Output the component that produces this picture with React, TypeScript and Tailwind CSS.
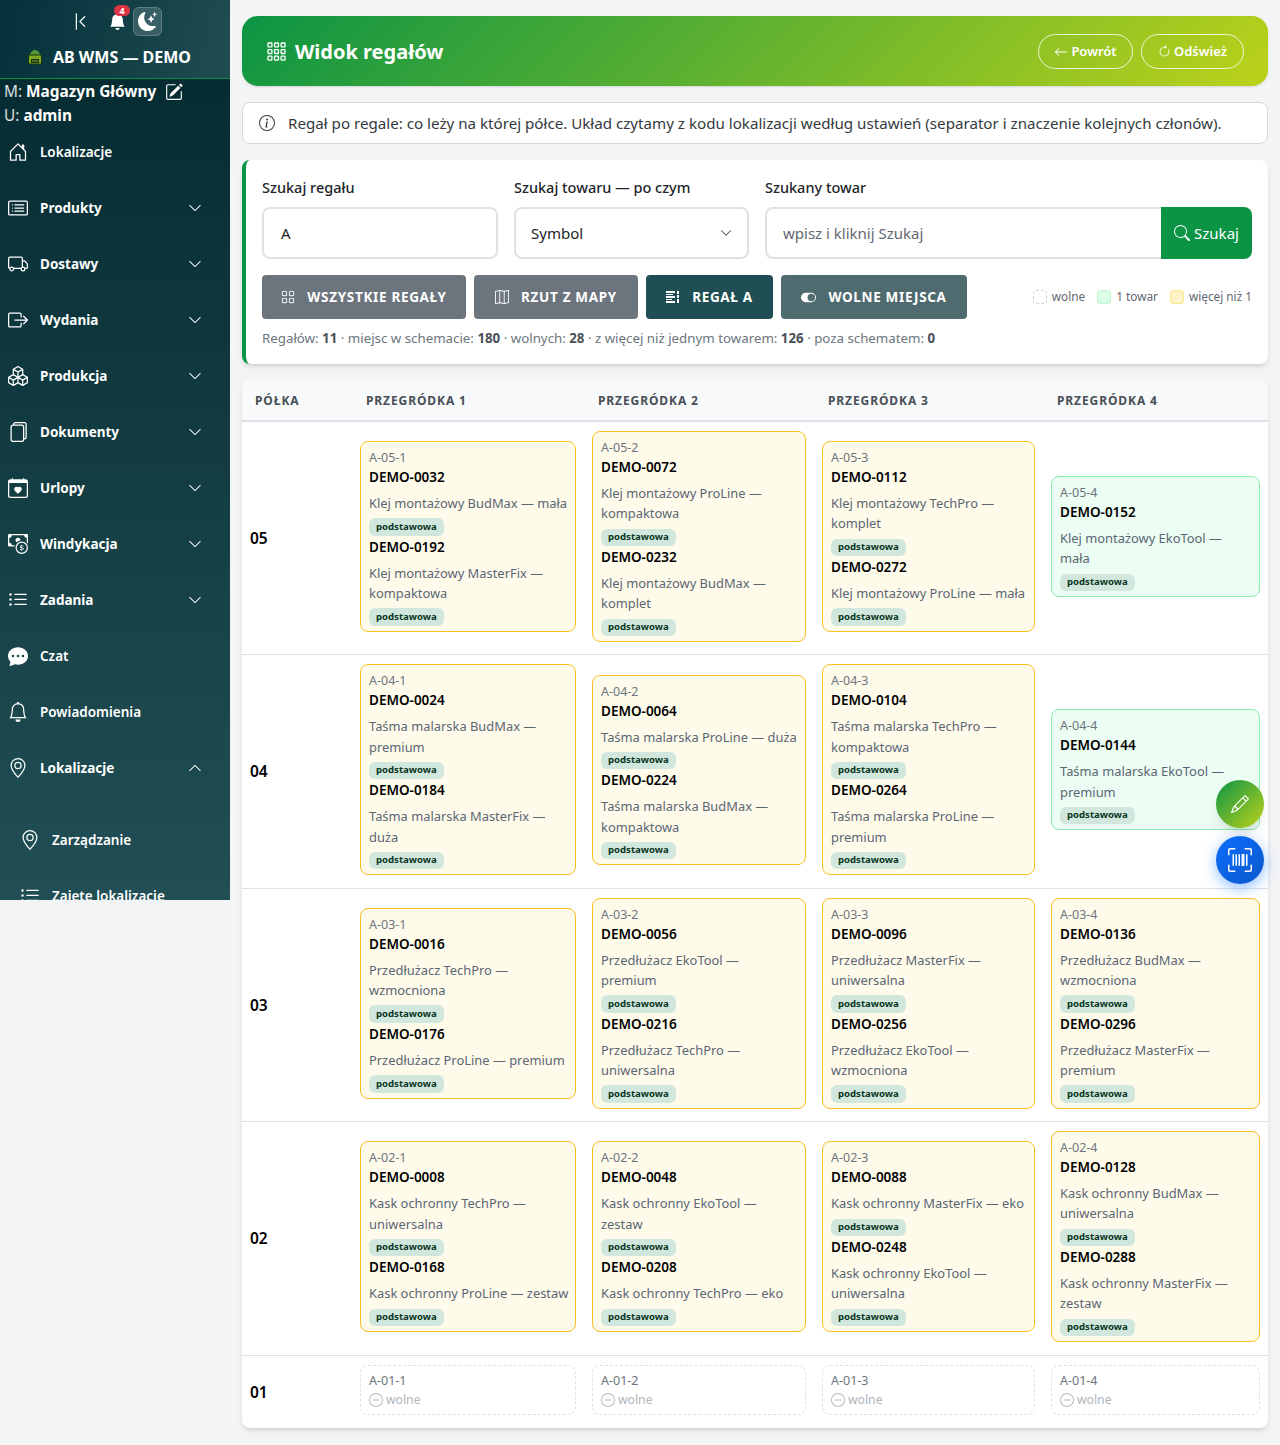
import type { ReactNode } from 'react';
import {
  BsArrowClockwise,
  BsArrowLeft,
  BsBell,
  BsBellFill,
  BsBoxArrowRight,
  BsBoxes,
  BsCalendarHeart,
  BsCardList,
  BsCashCoin,
  BsChatDotsFill,
  BsChevronBarLeft,
  BsChevronDown,
  BsChevronUp,
  BsDashCircle,
  BsFiles,
  BsGeoAlt,
  BsGrid,
  BsGrid3X3Gap,
  BsHouseDoor,
  BsInfoCircle,
  BsListUl,
  BsMap,
  BsMoonStarsFill,
  BsPencil,
  BsPencilSquare,
  BsSearch,
  BsToggleOn,
  BsTruck,
  BsUpcScan,
} from 'react-icons/bs';

const menu = [
  { label: 'Lokalizacje', icon: BsHouseDoor, weight: 'font-semibold' },
  { label: 'Produkty', icon: BsCardList, arrow: 'down' },
  { label: 'Dostawy', icon: BsTruck, arrow: 'down' },
  { label: 'Wydania', icon: BsBoxArrowRight, arrow: 'down' },
  { label: 'Produkcja', icon: BsBoxes, arrow: 'down' },
  { label: 'Dokumenty', icon: BsFiles, arrow: 'down' },
  { label: 'Urlopy', icon: BsCalendarHeart, arrow: 'down' },
  { label: 'Windykacja', icon: BsCashCoin, arrow: 'down' },
  { label: 'Zadania', icon: BsListUl, arrow: 'down' },
  { label: 'Czat', icon: BsChatDotsFill, weight: 'font-semibold' },
  { label: 'Powiadomienia', icon: BsBell, weight: 'font-semibold' },
  { label: 'Lokalizacje', icon: BsGeoAlt, arrow: 'up' },
];

type Item = { sku: string; name: string };
type Cell = { code: string; items: Item[] };

const rows: { shelf: string; cells: Cell[] }[] = [
  {
    shelf: '05',
    cells: [
      { code: 'A-05-1', items: [{ sku: 'DEMO-0032', name: 'Klej montażowy BudMax — mała' }, { sku: 'DEMO-0192', name: 'Klej montażowy MasterFix — kompaktowa' }] },
      { code: 'A-05-2', items: [{ sku: 'DEMO-0072', name: 'Klej montażowy ProLine — kompaktowa' }, { sku: 'DEMO-0232', name: 'Klej montażowy BudMax — komplet' }] },
      { code: 'A-05-3', items: [{ sku: 'DEMO-0112', name: 'Klej montażowy TechPro — komplet' }, { sku: 'DEMO-0272', name: 'Klej montażowy ProLine — mała' }] },
      { code: 'A-05-4', items: [{ sku: 'DEMO-0152', name: 'Klej montażowy EkoTool — mała' }] },
    ],
  },
  {
    shelf: '04',
    cells: [
      { code: 'A-04-1', items: [{ sku: 'DEMO-0024', name: 'Taśma malarska BudMax — premium' }, { sku: 'DEMO-0184', name: 'Taśma malarska MasterFix — duża' }] },
      { code: 'A-04-2', items: [{ sku: 'DEMO-0064', name: 'Taśma malarska ProLine — duża' }, { sku: 'DEMO-0224', name: 'Taśma malarska BudMax — kompaktowa' }] },
      { code: 'A-04-3', items: [{ sku: 'DEMO-0104', name: 'Taśma malarska TechPro — kompaktowa' }, { sku: 'DEMO-0264', name: 'Taśma malarska ProLine — premium' }] },
      { code: 'A-04-4', items: [{ sku: 'DEMO-0144', name: 'Taśma malarska EkoTool — premium' }] },
    ],
  },
  {
    shelf: '03',
    cells: [
      { code: 'A-03-1', items: [{ sku: 'DEMO-0016', name: 'Przedłużacz TechPro — wzmocniona' }, { sku: 'DEMO-0176', name: 'Przedłużacz ProLine — premium' }] },
      { code: 'A-03-2', items: [{ sku: 'DEMO-0056', name: 'Przedłużacz EkoTool —\npremium' }, { sku: 'DEMO-0216', name: 'Przedłużacz TechPro — uniwersalna' }] },
      { code: 'A-03-3', items: [{ sku: 'DEMO-0096', name: 'Przedłużacz MasterFix — uniwersalna' }, { sku: 'DEMO-0256', name: 'Przedłużacz EkoTool — wzmocniona' }] },
      { code: 'A-03-4', items: [{ sku: 'DEMO-0136', name: 'Przedłużacz BudMax — wzmocniona' }, { sku: 'DEMO-0296', name: 'Przedłużacz MasterFix — premium' }] },
    ],
  },
  {
    shelf: '02',
    cells: [
      { code: 'A-02-1', items: [{ sku: 'DEMO-0008', name: 'Kask ochronny TechPro — uniwersalna' }, { sku: 'DEMO-0168', name: 'Kask ochronny ProLine — zestaw' }] },
      { code: 'A-02-2', items: [{ sku: 'DEMO-0048', name: 'Kask ochronny EkoTool — zestaw' }, { sku: 'DEMO-0208', name: 'Kask ochronny TechPro — eko' }] },
      { code: 'A-02-3', items: [{ sku: 'DEMO-0088', name: 'Kask ochronny MasterFix — eko' }, { sku: 'DEMO-0248', name: 'Kask ochronny EkoTool — uniwersalna' }] },
      { code: 'A-02-4', items: [{ sku: 'DEMO-0128', name: 'Kask ochronny BudMax — uniwersalna' }, { sku: 'DEMO-0288', name: 'Kask ochronny MasterFix — zestaw' }] },
    ],
  },
  {
    shelf: '01',
    cells: [
      { code: 'A-01-1', items: [] },
      { code: 'A-01-2', items: [] },
      { code: 'A-01-3', items: [] },
      { code: 'A-01-4', items: [] },
    ],
  },
];

const gridCols = 'grid grid-cols-[110px_232px_230px_229px_225px]';

// logo magazynu
const LogoIcon = () => (
  <svg width="16" height="16" viewBox="0 0 16 16">
    <path d="M3 6c0-2.5 2.5-5 5-5s5 2.500 5 5z" fill="#4f9a35" />
    <rect x="1.500" y="6" width="13" height="9" fill="#7fa821" stroke="#1b3212" />
    <rect x="4" y="10" width="8" height="4" fill="#1d3312" />
    <rect x="5" y="11.500" width="1.500" height="1" fill="#a8c84a" />
    <rect x="7.300" y="11.500" width="1.500" height="1" fill="#a8c84a" />
    <rect x="9.500" y="11.500" width="1.500" height="1" fill="#a8c84a" />
  </svg>
);

// ikona regalu: linie z kolumna po prawej
const ShelfIcon = () => (
  <svg width="14" height="14" viewBox="0 0 14 14" fill="currentColor">
    <rect x="0" y="1" width="9" height="2" />
    <rect x="0" y="4" width="7" height="1" />
    <rect x="0" y="6" width="9" height="2" />
    <rect x="0" y="9" width="6" height="1" />
    <rect x="0" y="11" width="9" height="2" />
    <rect x="11" y="1" width="2" height="3" />
    <rect x="11" y="5" width="2" height="3" />
    <rect x="11" y="9" width="2" height="4" />
  </svg>
);

const Sidebar = () => (
  <aside className="h-[900px] w-[230px] shrink-0 overflow-hidden bg-[linear-gradient(180deg,#03292f,#214f55)] text-white">
    <div className="h-[79px] border-b border-[#0b8a45] bg-[linear-gradient(100deg,#04313a,#1f4d52)]">
      <div className="flex h-[43px] items-center pl-[71px]">
        <BsChevronBarLeft size={19} />
        <div className="relative ml-[19px]">
          <BsBellFill size={17} />
          <span className="absolute -top-[8px] left-[5px] flex h-[11px] w-[16px] items-center justify-center rounded-full bg-[#dc3545] text-[9px] font-bold">4</span>
        </div>
        <div className="ml-[7px] flex h-[29px] w-[29px] items-center justify-center rounded-md border border-white/20 bg-white/15">
          <BsMoonStarsFill size={19} />
        </div>
      </div>
      <div className="flex items-center pl-[27px] pt-[2px]">
        <LogoIcon />
        <span className="ml-[10px] text-[16px] font-bold">AB WMS — DEMO</span>
      </div>
    </div>
    <div className="px-[4px] pt-[1px] text-[15.4px] leading-[24px]">
      <div className="flex items-center">
        <span className="text-white/85">M:</span>
        <b className="ml-[4px]">Magazyn Główny</b>
        <BsPencilSquare size={18} className="ml-[9px]" />
      </div>
      <div>
        <span className="text-white/85">U:</span> <b>admin</b>
      </div>
    </div>
    <nav className="-mt-[4px]">
      {menu.map((m, i) => {
        const Icon = m.icon;
        return (
          <div key={i} className="flex h-[56px] items-center pl-[8px] pr-[28px]">
            <Icon size={20} />
            <span className={`ml-[12px] flex-1 text-[13.5px] ${m.weight || 'font-bold'}`}>{m.label}</span>
            {m.arrow === 'down' && <BsChevronDown size={14} />}
            {m.arrow === 'up' && <BsChevronUp size={14} />}
          </div>
        );
      })}
      <div className="mt-[16px] flex h-[56px] items-center pl-[20px]">
        <BsGeoAlt size={20} />
        <span className="ml-[12px] text-[13.5px] font-semibold">Zarządzanie</span>
      </div>
      <div className="flex h-[56px] items-center pl-[20px]">
        <BsListUl size={20} />
        <span className="ml-[12px] text-[13.5px] font-semibold">Zajęte lokalizacje</span>
      </div>
    </nav>
  </aside>
);

const ActionButton = ({ icon, label, className }: { icon: ReactNode; label: string; className: string }) => (
  <button className={`flex h-[44px] items-center justify-center gap-[12px] rounded text-[13.5px] font-bold uppercase tracking-[0.05em] text-white ${className}`}>
    {icon}
    {label}
  </button>
);

const Legend = ({ swatch, label }: { swatch: string; label: string }) => (
  <span className="flex items-center gap-[5px]">
    <span className={`h-[14px] w-[14px] rounded-[3px] border ${swatch}`}></span>
    {label}
  </span>
);

const SlotCard = ({ cell }: { cell: Cell }) => {
  if (cell.items.length === 0) {
    return (
      <div className="mb-[6px] h-[50px] rounded-lg border border-dashed border-[#dee2e6] px-[8px] pt-[7px]">
        <div className="text-[12.500px] leading-[15px] text-[#6c757d]">{cell.code}</div>
        <div className="mt-[3px] flex items-center gap-[3px] text-[12.200px] leading-[18px] text-[#adb5bd]">
          <BsDashCircle size={14} />
          wolne
        </div>
      </div>
    );
  }
  const multi = cell.items.length > 1;
  return (
    <div className={`mb-[5px] rounded-lg border pb-[4px] pl-[8px] pr-[6px] pt-[8px] ${multi ? 'border-[#fbbf24] bg-[#fffbeb]' : 'border-[#86efac] bg-[#ecfdf3]'}`}>
      <div className="text-[12.500px] leading-[15px] text-[#6c757d]">{cell.code}</div>
      <div className="pt-[2px]">
        {cell.items.map(item => (
          <div key={item.sku}>
            <div className="text-[13.500px] font-semibold leading-[21px] text-black">{item.sku}</div>
            <div className="mt-[5px] whitespace-pre-line text-[12.900px] leading-[20.25px] text-[#5b6673]">{item.name}</div>
            <div className="mb-[1px] mt-[5px] flex h-[17.500px]">
              <span className="flex items-center rounded-md bg-[#d1e7dd] px-[7px] text-[9.600px] font-bold text-[#0a3622]">podstawowa</span>
            </div>
          </div>
        ))}
      </div>
    </div>
  );
};

const App = () => {
  return (
    <div className="flex min-h-[1445px] items-start bg-[#f3f4f6] font-['Noto_Sans',sans-serif] text-[#212529]">
      <Sidebar />

      <main className="relative w-[1050px] pb-[17px] pl-[12px] pr-[12px] pt-[16px]">
        <div className="flex h-[70px] items-center justify-between rounded-2xl bg-[linear-gradient(135deg,#0b9444,#bcd21a)] pl-[24px] pr-[24px] pt-[1px] text-white shadow-sm">
          <h1 className="flex items-center gap-[8px] text-[20px] font-bold">
            <BsGrid3X3Gap size={21} />
            Widok regałów
          </h1>
          <div className="flex gap-[8px]">
            <button className="flex h-[35px] w-[95px] items-center justify-center gap-[3px] rounded-full border border-white/80 text-[13px] font-semibold">
              <BsArrowLeft size={14} />
              Powrót
            </button>
            <button className="flex h-[35px] w-[103px] items-center justify-center gap-[3px] rounded-full border border-white/80 text-[13px] font-semibold">
              <BsArrowClockwise size={13} />
              Odśwież
            </button>
          </div>
        </div>

        <div className="mt-[16px] flex h-[42px] items-center gap-[13px] rounded-lg border border-[#d5d7da] bg-white pl-[16px] text-[15.150px] text-[#343a40]">
          <BsInfoCircle size={16} />
          Regał po regale: co leży na której półce. Układ czytamy z kodu lokalizacji według ustawień (separator i znaczenie kolejnych członów).
        </div>

        <section className="mt-[16px] h-[204px] rounded-lg border-l-4 border-[#0b9444] bg-white pl-[16px] pr-[16px] pt-[17px] shadow-md">
          <div className="grid grid-cols-[236px_235px_487px] gap-x-[16px]">
            <div>
              <label className="block text-[14.500px] font-medium leading-[21px]">Szukaj regału</label>
              <div className="mt-[9px] flex h-[52px] items-center rounded-lg border-2 border-[#dee2e6] pl-[17px] text-[15px]">A</div>
            </div>
            <div>
              <label className="block text-[14.500px] font-medium leading-[21px]">Szukaj towaru — po czym</label>
              <div className="mt-[9px] flex h-[52px] items-center justify-between rounded-lg border-2 border-[#dee2e6] pl-[15px] pr-[15px] text-[15px]">
                Symbol
                <BsChevronDown size={12} />
              </div>
            </div>
            <div>
              <label className="block text-[14.500px] font-medium leading-[21px]">Szukany towar</label>
              <div className="mt-[9px] flex h-[52px]">
                <div className="flex flex-1 items-center rounded-l-lg border-2 border-r-0 border-[#dee2e6] pl-[16px] text-[15px] text-[#5f6871]">wpisz i kliknij Szukaj</div>
                <button className="flex w-[91px] items-center justify-center gap-[4px] rounded-r-lg bg-[#0b9444] text-[15px] text-white">
                  <BsSearch size={16} />
                  Szukaj
                </button>
              </div>
            </div>
          </div>

          <div className="mt-[16px] flex items-center gap-[8px]">
            <ActionButton className="w-[204px] bg-[#6c757d]" icon={<BsGrid size={14} />} label="Wszystkie regały" />
            <ActionButton className="w-[164px] bg-[#6c757d]" icon={<BsMap size={14} />} label="Rzut z mapy" />
            <ActionButton className="w-[127px] bg-[#1f4f54]" icon={<ShelfIcon />} label="Regał A" />
            <ActionButton className="w-[186px] bg-[#4f6b70]" icon={<BsToggleOn size={15} />} label="Wolne miejsca" />
            <div className="ml-auto flex gap-[12px] text-[11.800px] text-[#5f6871]">
              <Legend swatch="border-dashed border-[#ced4da]" label="wolne" />
              <Legend swatch="border-[#bbf7d0] bg-[#dcfce7]" label="1 towar" />
              <Legend swatch="border-[#fde68a] bg-[#fef3c7]" label="więcej niż 1" />
            </div>
          </div>

          <p className="mt-[9px] text-[13.300px] leading-[20px] text-[#6c757d]">
            Regałów: <b className="text-[#495057]">11</b> · miejsc w schemacie: <b className="text-[#495057]">180</b> · wolnych: <b className="text-[#495057]">28</b> · z więcej niż jednym towarem: <b className="text-[#495057]">126</b> · poza schematem: <b className="text-[#495057]">0</b>
          </p>
        </section>

        <section className="mt-[16px] overflow-hidden rounded-lg bg-white shadow-md">
          <div className={`${gridCols} h-[42px] items-center border-b-2 border-[#dee2e6] bg-[#f8f9fa] pt-[2px] text-[12px] font-bold uppercase tracking-[0.075em] text-[#495057]`}>
            <div className="pl-[13px]">Półka</div>
            <div className="pl-[14px]">Przegródka 1</div>
            <div className="pl-[14px]">Przegródka 2</div>
            <div className="pl-[14px]">Przegródka 3</div>
            <div className="pl-[14px]">Przegródka 4</div>
          </div>
          {rows.map((row, i) => (
            <div key={row.shelf} className={`${gridCols} items-center ${i < rows.length - 1 ? 'border-b border-[#dee2e6]' : ''}`}>
              <div className="pl-[8px] pt-[1px] text-[15.500px] font-semibold text-black">{row.shelf}</div>
              {row.cells.map(cell => (
                <div key={cell.code} className="px-[8px] pb-[7.400px] pt-[9px]">
                  <SlotCard cell={cell} />
                </div>
              ))}
            </div>
          ))}
        </section>

        <button className="absolute left-[986px] top-[780px] flex h-[48px] w-[48px] items-center justify-center rounded-full bg-[linear-gradient(135deg,#0b9444,#bcd21a)] text-white shadow-lg">
          <BsPencil size={18} />
        </button>
        <button className="absolute left-[986px] top-[836px] flex h-[48px] w-[48px] items-center justify-center rounded-full bg-[linear-gradient(135deg,#0d6efd,#0a58ca)] text-white shadow-[0_4px_14px_rgba(13,110,253,0.45)]">
          <BsUpcScan size={24} />
        </button>
      </main>
    </div>
  );
};

export default App;
